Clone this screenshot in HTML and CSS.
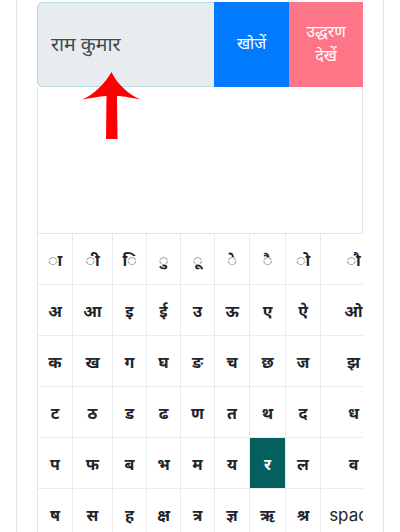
FILE: index.html
```html
<!DOCTYPE html>
<html lang="hi">
<head>
    <meta charset="UTF-8">
    <title>हिंदी कीबोर्ड</title>
    <link rel="stylesheet" href="styles.css">
</head>
<body>
    <div class="card">
        <div class="searchGroup">
            <div class="nameInput">राम कुमार</div>
            <button class="btn btnSearch">खोजें</button>
            <button class="btn btnQuote">उद्धरण देखें</button>
            <svg class="arrow" viewBox="0 0 60 68" width="60" height="68">
                <path d="M29.5 0 C34 10 46 23 59 27.5 C52 26.5 42 24 35 24 L35.5 67 L24 67 L24.5 24 C17 24 8 26.5 0 27.5 C12 23 24 10 29.5 0 Z" fill="#ff0000"/>
            </svg>
        </div>
        <div class="resultBox"></div>
        <div class="keyboard">
            <div class="key">ा</div><div class="key">ी</div><div class="key">ि</div><div class="key">ु</div><div class="key">ू</div><div class="key">े</div><div class="key">ै</div><div class="key">ो</div><div class="key">ौ</div>
            <div class="key">अ</div><div class="key">आ</div><div class="key">इ</div><div class="key">ई</div><div class="key">उ</div><div class="key">ऊ</div><div class="key">ए</div><div class="key">ऐ</div><div class="key">ओ</div>
            <div class="key">क</div><div class="key">ख</div><div class="key">ग</div><div class="key">घ</div><div class="key">ङ</div><div class="key">च</div><div class="key">छ</div><div class="key">ज</div><div class="key">झ</div>
            <div class="key">ट</div><div class="key">ठ</div><div class="key">ड</div><div class="key">ढ</div><div class="key">ण</div><div class="key">त</div><div class="key">थ</div><div class="key">द</div><div class="key">ध</div>
            <div class="key">प</div><div class="key">फ</div><div class="key">ब</div><div class="key">भ</div><div class="key">म</div><div class="key">य</div><div class="key active">र</div><div class="key">ल</div><div class="key">व</div>
            <div class="key">ष</div><div class="key">स</div><div class="key">ह</div><div class="key">क्ष</div><div class="key">त्र</div><div class="key">ज्ञ</div><div class="key">ऋ</div><div class="key">श्र</div><div class="key space">space</div>
        </div>
    </div>
</body>
</html>
```

FILE: styles.css
```css
html, body {
    height: 532px;
    overflow: hidden;
}
body {
    margin: 0;
    background: #fff;
    color: #212529;
    font-family: "Noto Sans", Roboto, "Liberation Sans", sans-serif;
    font-size: 16px;
}
.card {
    margin: 0 16px;
    padding: 2px 20px 0;
    height: 530px;
    border-left: 1px solid #e6e6e6;
    border-right: 1px solid #e6e6e6;
}
.searchGroup {
    position: relative;
    display: flex;
    height: 85px;
}
.nameInput {
    flex: 0 0 177px;
    box-sizing: border-box;
    display: flex;
    align-items: center;
    padding: 0 0 2px 13px;
    background: #e8ecee;
    color: #41484e;
    font-size: 19.5px;
    border: 1px solid #b5dbe6;
    border-right: none;
    border-radius: 6px 0 0 6px;
}
.btn {
    border: none;
    padding: 0 12px 3px;
    font: inherit;
    line-height: 24px;
    color: #fff;
}
.btnSearch {
    flex: 0 0 75px;
    background: #007bff;
}
.btnQuote {
    flex: 0 0 74px;
    background: #ff7588;
}
.arrow {
    position: absolute;
    left: 45px;
    top: 70px;
}
.resultBox {
    height: 146px;
    border: 1px solid #e6e6e6;
    border-top: none;
}
.keyboard {
    display: grid;
    grid-template-columns: 35px 40px 34px 34px 34px 35px 36px 35px 66px;
    grid-auto-rows: 51px;
    overflow: hidden;
    border-left: 1px solid #e6e6e6;
    font-weight: 700;
}
.key {
    display: flex;
    align-items: center;
    justify-content: center;
    padding-top: 2px;
    box-sizing: border-box;
    border-right: 1px solid #e9ecef;
    border-bottom: 1px solid #e9ecef;
    white-space: nowrap;
}
.active {
    background: #055f5f;
    color: #fff;
}
.space {
    font-family: Inter, "Noto Sans", sans-serif;
    font-size: 17px;
    font-weight: 400;
}
```
